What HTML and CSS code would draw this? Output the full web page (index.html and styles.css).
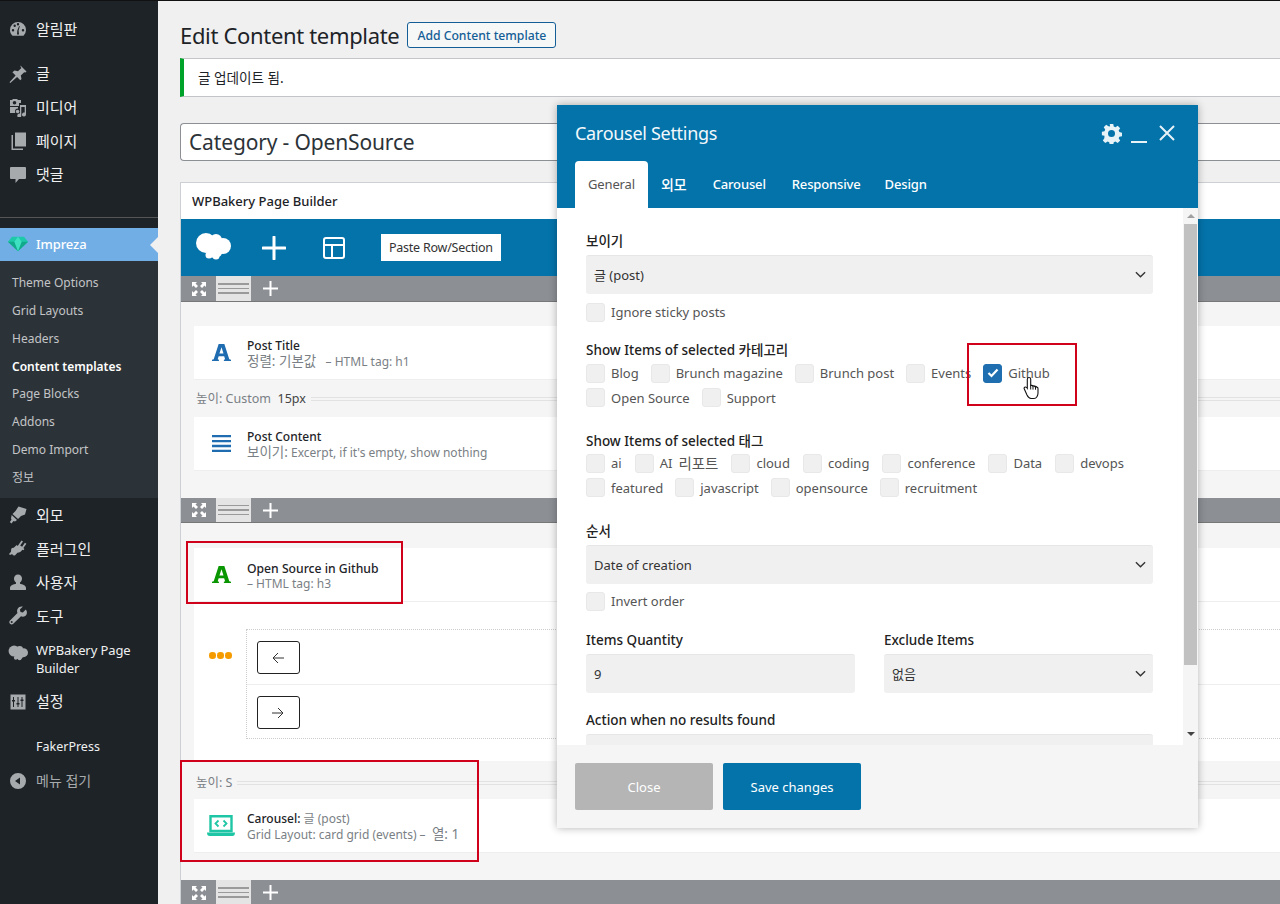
FILE: index.html
```html
<!DOCTYPE html>
<html lang="ko">
<head>
<meta charset="utf-8">
<title>Edit Content template</title>
<link rel="stylesheet" href="styles.css">
</head>
<body>
<aside class="sidebar">
  <ul class="menu first">
    <li class="item"><svg class="ic" viewBox="0 0 20 20"><path d="M10 3a8 8 0 0 0-8 8c0 2.300 1 4.300 2.500 5.700h11A8 8 0 0 0 18 11a8 8 0 0 0-8-8zM5 12.500a1.200 1.200 0 1 1 0-2.500 1.200 1.200 0 0 1 0 2.500zM6.700 8a1.200 1.200 0 1 1 0-2.400 1.200 1.200 0 0 1 0 2.400zM10 6.500a1.200 1.200 0 1 1 0-2.400 1.200 1.200 0 0 1 0 2.400zM11 15.500H9l.3-4 1.800-4.500.7.200-1.200 4.300zM15 12.500a1.200 1.200 0 1 1 0-2.500 1.200 1.200 0 0 1 0 2.500z" fill-rule="evenodd"/></svg>알림판</li>
  </ul>
  <ul class="menu posts">
    <li class="item"><svg class="ic" viewBox="0 0 20 20"><path d="M12.500 1.500l6 6-1 1-1.300-.3-3.400 3.400.7 3.400-1.200 1.200-3.200-3.200-6.800 6.100-.8-.8 6.100-6.800-3.200-3.200L6.600 6.600l3.400.7 3.400-3.400-.9-1.400z"/></svg>글</li>
    <li class="item"><svg class="ic" viewBox="0 0 20 20"><path d="M5 2h4l1 1h3v3H11v3H2V3h2zM6.500 4a1.800 1.800 0 1 0 0 3.600 1.800 1.800 0 0 0 0-3.600zM2 10h8v1.500A3 3 0 0 0 7 14.500c0 .5.100 1 .3 1.500H2zM12 8h6v9.500a2 2 0 1 1-1.300-1.900V10h-3.400v8.500a2 2 0 1 1-1.300-1.900z" fill-rule="evenodd"/><circle cx="9.600" cy="14.500" r="1.800"/></svg>미디어</li>
    <li class="item"><svg class="ic" viewBox="0 0 20 20"><path d="M7 1.500h11v14H7zM5 4v13.500h10V19H3.500V4z"/></svg>페이지</li>
    <li class="item"><svg class="ic" viewBox="0 0 20 20"><path d="M3 3h14a1 1 0 0 1 1 1v10a1 1 0 0 1-1 1h-6l-3.500 4v-4H3a1 1 0 0 1-1-1V4a1 1 0 0 1 1-1z"/></svg>댓글</li>
  </ul>
  <div class="sep"></div>
  <div class="item active"><svg class="ic gem" viewBox="0 0 24 20"><path d="M5.500 2h13L23 7.500 12 18 1 7.500z" fill="#1dc9a8"/><path d="M1 7.500h22L12 18z" fill="#11a98c"/><path d="M8 7.500L12 2l4 5.500L12 18z" fill="#3fe0c2"/></svg>Impreza</div>
  <ul class="submenu">
    <li>Theme Options</li>
    <li>Grid Layouts</li>
    <li>Headers</li>
    <li class="current">Content templates</li>
    <li>Page Blocks</li>
    <li>Addons</li>
    <li>Demo Import</li>
    <li>정보</li>
  </ul>
  <ul class="menu lower">
    <li class="item"><svg class="ic" viewBox="0 0 20 20"><path d="M18.500 4L10.500 1.500 7.500 6 4.500 9l5.500 5 3-3 4-1.500zM3.700 10l5.300 5-2 1.500-1.500-.5L3.500 18.500 1.800 17l1.700-2.300-.5-1.500z"/></svg>외모</li>
    <li class="item"><svg class="ic" viewBox="0 0 20 20"><path d="M13.500 1.500l1.500 1-2.800 4 1.900 1.300 2.800-4 1.500 1-3 4.300 1 .8-1 1.400-1-.6c-1.300 1.800-3 3-5 3l-2.500 2.800-2-.2-.7-1.300L2 16l-1-1 2-2.200.2-2.800L4 9l1.700-.2 3-2.700 1 .8z"/></svg>플러그인</li>
    <li class="item"><svg class="ic" viewBox="0 0 20 20"><path d="M10 2.500a4 4 0 0 1 4 4.300c0 1.500-.9 3-2 3.700v1.200c2 .6 6 1.300 6 4.300v1.500a.9.900 0 0 1-.9.500H2.900a.9.900 0 0 1-.9-.5V16c0-3 4-3.700 6-4.300v-1.200c-1.100-.7-2-2.200-2-3.700a4 4 0 0 1 4-4.300z"/></svg>사용자</li>
    <li class="item"><svg class="ic" viewBox="0 0 20 20"><path d="M17.800 3.500l-3 3-2.300-.6-.6-2.300 3-3C13 0 10.700.8 9.700 2.700c-.8 1.300-.8 3-.2 4.200L2 14.500C.9 15.600 1.200 17 2 17.800s2.300 1.100 3.300 0l7.700-7.500c1.300.6 2.900.5 4.200-.2 1.800-1.200 2.500-4.300.6-6.600zM3.700 17a1 1 0 1 1 0-2 1 1 0 0 1 0 2z" fill-rule="evenodd"/></svg>도구</li>
    <li class="item two"><svg class="ic cloud" viewBox="0 0 36 27"><circle cx="11" cy="10" r="10"/><circle cx="21" cy="7" r="6"/><circle cx="28" cy="13" r="8"/><circle cx="20" cy="17" r="8"/><circle cx="14" cy="22" r="3.500"/><circle cx="21" cy="23" r="3.500"/></svg><span>WPBakery Page<br>Builder</span></li>
    <li class="item"><svg class="ic" viewBox="0 0 20 20"><path d="M2.500 2.500h15v15h-15zM5 5v3H4v1.500h1V15h1V9.500h1V8H6V5zm4.500 0v6H8.500v1.500h1V15h1v-2.500h1V11h-1V5zm4 0v2.500h-1V9h1v6h1V9h1V7.500h-1V5z" fill-rule="evenodd"/></svg>설정</li>
  </ul>
  <ul class="menu extra">
    <li class="item plain">FakerPress</li>
    <li class="item dim"><svg class="ic" viewBox="0 0 20 20"><path d="M10 2a8 8 0 1 1 0 16 8 8 0 0 1 0-16zm2 4.500L7 10l5 3.500z" fill-rule="evenodd"/></svg>메뉴 접기</li>
  </ul>
</aside>

<main class="main">
  <header class="page-head">
    <h1>Edit Content template</h1>
    <a class="add-btn">Add Content template</a>
  </header>
  <div class="notice">글 업데이트 됨.</div>
  <div class="title-input">Category - OpenSource</div>

  <section class="builder">
    <div class="builder-title">WPBakery Page Builder</div>
    <div class="toolbar">
      <svg class="logo" viewBox="0 0 36 27" fill="#fff"><circle cx="11" cy="10" r="10"/><circle cx="21" cy="7" r="6"/><circle cx="28" cy="13" r="8"/><circle cx="20" cy="17" r="8"/><circle cx="14" cy="22" r="3.500"/><circle cx="21" cy="23" r="3.500"/></svg>
      <svg class="tool-ic" viewBox="0 0 24 24"><path d="M12 1v22M1 12h22" stroke="#fff" stroke-width="3" stroke-linecap="round" fill="none"/></svg>
      <svg class="tool-ic" viewBox="0 0 24 24"><path d="M4 2h16a2 2 0 0 1 2 2v16a2 2 0 0 1-2 2H4a2 2 0 0 1-2-2V4a2 2 0 0 1 2-2zM2 9h20M10 9v13" stroke="#fff" stroke-width="2" fill="none"/></svg>
      <span class="paste">Paste Row/Section</span>
    </div>

    <div class="row-bar">
      <svg class="expand" viewBox="0 0 14 14"><path d="M0 0h5L3.500 1.500 6 4 4 6 1.500 3.500 0 5zM14 0v5l-1.500-1.500L10 6 8 4l2.500-2.500L9 0zM0 14V9l1.500 1.500L4 8l2 2-2.500 2.500L5 14zM14 14H9l1.500-1.500L8 10l2-2 2.500 2.500L14 9z" fill="#fff"/></svg>
      <span class="drag"><i></i><i></i><i></i></span>
      <svg class="plus" viewBox="0 0 15 15"><path d="M7.500 0v15M0 7.500h15" stroke="#fff" stroke-width="2"/></svg>
    </div>
    <div class="row-body first-body">
      <div class="card">
        <svg class="a-ic" viewBox="0 0 20 20"><path d="M7 1h6l5.200 16 1.800.5V19h-7.500v-1.500l1.300-.5-1-3H7l-1 3 1.300.5V19H0v-1.500l1.800-.5zM7.800 11h4.300L10 4.500z" fill="#1f6db0" fill-rule="evenodd"/></svg>
        <div class="card-text"><b>Post Title</b><span><span class="ko">정렬: 기본값</span> &nbsp;&nbsp;– HTML tag: h1</span></div>
      </div>
      <div class="gap-row"><span>높이: Custom &nbsp;<em>15px</em></span><i></i></div>
      <div class="card">
        <svg class="a-ic" viewBox="0 0 20 20"><path d="M0 1h20v2.500H0zM0 6.200h20v2.500H0zM0 11.400h20v2.500H0zM0 16.600h20v2.400H0z" fill="#1f6db0"/></svg>
        <div class="card-text"><b>Post Content</b><span><span class="ko">보이기:</span> Excerpt, if it's empty, show nothing</span></div>
      </div>
    </div>

    <div class="row-bar short">
      <svg class="expand" viewBox="0 0 14 14"><path d="M0 0h5L3.500 1.500 6 4 4 6 1.500 3.500 0 5zM14 0v5l-1.500-1.500L10 6 8 4l2.500-2.500L9 0zM0 14V9l1.500 1.500L4 8l2 2-2.500 2.500L5 14zM14 14H9l1.500-1.500L8 10l2-2 2.500 2.500L14 9z" fill="#fff"/></svg>
      <span class="drag"><i></i><i></i><i></i></span>
      <svg class="plus" viewBox="0 0 15 15"><path d="M7.500 0v15M0 7.500h15" stroke="#fff" stroke-width="2"/></svg>
    </div>
    <div class="row-body second-body">
      <div class="card">
        <svg class="a-ic" viewBox="0 0 20 20"><path d="M7 1h6l5.200 16 1.800.5V19h-7.500v-1.500l1.300-.5-1-3H7l-1 3 1.300.5V19H0v-1.500l1.800-.5zM7.800 11h4.300L10 4.500z" fill="#0a9600" fill-rule="evenodd"/></svg>
        <div class="card-text"><b class="big">Open Source in Github</b><span>– HTML tag: h3</span></div>
      </div>
      <div class="nav-wrap">
        <span class="dots"><i></i><i></i><i></i></span>
        <div class="nav-box">
          <div class="nav-cell"><span class="nav-btn"><svg viewBox="0 0 12 12"><path d="M6 1L1 6l5 5M1 6h11" stroke="#333" fill="none"/></svg></span></div>
          <div class="nav-cell"><span class="nav-btn"><svg viewBox="0 0 12 12"><path d="M6 1l5 5-5 5M11 6H0" stroke="#333" fill="none"/></svg></span></div>
        </div>
      </div>
      <div class="gap-row gap-s"><span>높이: S</span><i></i></div>
      <div class="card">
        <svg class="a-ic laptop" viewBox="0 0 28 22"><path d="M3.500 1.200h21v14.800h-21z" fill="none" stroke="#1fc6a5" stroke-width="2.400"/><path d="M0 17.500h28c0 2.500-1 3.500-2.500 3.500h-23C1 21 0 20 0 17.500z" fill="#1fc6a5"/><path d="M11.500 5.500l-3 3 3 3M16.500 5.500l3 3-3 3" fill="none" stroke="#1fc6a5" stroke-width="1.800"/></svg>
        <div class="card-text"><b>Carousel: <u>글 (post)</u></b><span>Grid Layout: card grid (events) – &nbsp;<span class="ko">열: 1</span></span></div>
      </div>
    </div>

    <div class="row-bar">
      <svg class="expand" viewBox="0 0 14 14"><path d="M0 0h5L3.500 1.500 6 4 4 6 1.500 3.500 0 5zM14 0v5l-1.500-1.500L10 6 8 4l2.500-2.500L9 0zM0 14V9l1.500 1.500L4 8l2 2-2.500 2.500L5 14zM14 14H9l1.500-1.500L8 10l2-2 2.500 2.500L14 9z" fill="#fff"/></svg>
      <span class="drag"><i></i><i></i><i></i></span>
      <svg class="plus" viewBox="0 0 15 15"><path d="M7.500 0v15M0 7.500h15" stroke="#fff" stroke-width="2"/></svg>
    </div>
  </section>
</main>

<div class="mark mark-a"></div>
<div class="mark mark-b"></div>

<section class="modal">
  <header class="modal-head">
    <div class="modal-title">
      <h2>Carousel Settings</h2>
      <div class="modal-actions">
        <svg class="gear" viewBox="0 0 24 24"><path d="M10 1h4l.6 3 1.900.8 2.600-1.700 2.800 2.800-1.700 2.600.8 1.900 3 .6v4l-3 .6-.8 1.900 1.700 2.600-2.800 2.800-2.600-1.700-1.900.8-.6 3h-4l-.6-3-1.900-.8-2.600 1.700-2.800-2.800 1.700-2.600L4 14.600l-3-.6v-4l3-.6.8-1.900-1.700-2.600 2.800-2.800 2.600 1.700L10.400 4zM12 8a4 4 0 1 0 0 8 4 4 0 0 0 0-8z" fill="#e8f3f8" fill-rule="evenodd"/></svg>
        <span class="minimize"></span>
        <svg class="close-x" viewBox="0 0 16 16"><path d="M1 1l14 14M15 1L1 15" stroke="#e8f3f8" stroke-width="2" fill="none"/></svg>
      </div>
    </div>
    <nav class="tabs">
      <span class="tab on">General</span>
      <span class="tab ko-tab">외모</span>
      <span class="tab">Carousel</span>
      <span class="tab">Responsive</span>
      <span class="tab">Design</span>
    </nav>
  </header>
  <div class="modal-body">
    <div class="form">
      <div class="field">
        <label class="lbl">보이기</label>
        <div class="select">글 (post)<svg viewBox="0 0 12 8"><path d="M1 1l5 5 5-5" stroke="#333" stroke-width="1.500" fill="none"/></svg></div>
        <div class="check-row single"><span class="chk"><i></i>Ignore sticky posts</span></div>
      </div>
      <div class="field group-a">
        <label class="lbl">Show Items of selected 카테고리</label>
        <div class="check-row"><span class="chk"><i></i>Blog</span><span class="chk"><i></i>Brunch magazine</span><span class="chk"><i></i>Brunch post</span><span class="chk"><i></i>Events</span><span class="chk checked"><i><svg viewBox="0 0 12 10"><path d="M1.500 5l3 3 6-6.500" stroke="#fff" stroke-width="2.200" fill="none"/></svg></i>Github</span></div>
        <div class="check-row"><span class="chk"><i></i>Open Source</span><span class="chk"><i></i>Support</span></div>
      </div>
      <div class="field group-b">
        <label class="lbl">Show Items of selected 태그</label>
        <div class="check-row wide"><span class="chk"><i></i>ai</span><span class="chk"><i></i>AI <span class="ko-lg">리포트</span></span><span class="chk"><i></i>cloud</span><span class="chk"><i></i>coding</span><span class="chk"><i></i>conference</span><span class="chk"><i></i>Data</span><span class="chk"><i></i>devops</span></div>
        <div class="check-row"><span class="chk"><i></i>featured</span><span class="chk"><i></i>javascript</span><span class="chk"><i></i>opensource</span><span class="chk"><i></i>recruitment</span></div>
      </div>
      <div class="field group-c">
        <label class="lbl">순서</label>
        <div class="select">Date of creation<svg viewBox="0 0 12 8"><path d="M1 1l5 5 5-5" stroke="#333" stroke-width="1.500" fill="none"/></svg></div>
        <div class="check-row single"><span class="chk"><i></i>Invert order</span></div>
      </div>
      <div class="two-col">
        <div><label class="lbl">Items Quantity</label><div class="select">9</div></div>
        <div><label class="lbl">Exclude Items</label><div class="select">없음<svg viewBox="0 0 12 8"><path d="M1 1l5 5 5-5" stroke="#333" stroke-width="1.500" fill="none"/></svg></div></div>
      </div>
      <div class="field group-d">
        <label class="lbl">Action when no results found</label>
        <div class="select"></div>
      </div>
    </div>
    <div class="scrollbar">
      <span class="arrow up"></span>
      <span class="thumb"></span>
      <span class="arrow down"></span>
    </div>
  </div>
  <footer class="modal-foot">
    <button class="btn grey">Close</button>
    <button class="btn blue">Save changes</button>
  </footer>
</section>

<div class="mark mark-c"></div>
<svg class="hand" viewBox="0 0 17 24"><path d="M6 1.500c1 0 1.700.7 1.700 1.700v6.300l1-.2c.6 0 1 .3 1.200.8.500-.4 1.500-.3 1.800.4.600-.4 1.700-.2 2 .6.700 0 1.300.5 1.300 1.400v4.500c0 2.500-1.500 5.500-4 5.500H8c-2 0-3-1.500-4-3.500L1.300 13c-.5-1 0-1.900.8-2 .9-.2 1.500.3 2.200 1.300V3.200c0-1 .7-1.700 1.700-1.700z" fill="#fff" stroke="#111" stroke-width="1.100"/><path d="M7.700 9.500v4M10 9.600v4M12.500 10.200v3.500" stroke="#111" fill="none"/></svg>
</body>
</html>
```
FILE: styles.css
```css
* { box-sizing: border-box; }
html, body { margin: 0; padding: 0; }
body {
  width: 1280px; height: 904px; overflow: hidden; display: flex;
  position: relative; background: #f0f0f1; border-top: 1px solid #111;
  font: 13px/1.4 "Noto Sans", "Noto Sans CJK KR", sans-serif; color: #3c434a;
}
ul { list-style: none; margin: 0; padding: 0; }

/* sidebar */
.sidebar { width: 158px; height: 903px; flex: none; background: #1d2327; color: #f0f0f1; padding-top: 11px; }
.item { display: flex; align-items: center; height: 33.6px; padding-left: 36px; position: relative; font-size: 15px; line-height: 18px; }
.ic { position: absolute; left: 8px; top: 7px; width: 20px; height: 20px; fill: #a7aaad; }
.posts { margin-top: 11px; }
.sep { height: 1px; background: #555; margin-top: 25.6px; }
.active { margin-top: 10px; height: 33px; background: #72aee6; color: #fff; font-weight: 500; font-size: 13px; letter-spacing: -.1px; }
.active::after { content: ""; position: absolute; right: 0; top: 9px; border: 8px solid transparent; border-right-color: #f0f0f1; border-left: 0; }
.ic.gem { left: 7px; top: 6px; width: 22px; }
.submenu { background: #2c3338; height: 237px; padding-top: 8.700px; }
.submenu li { height: 27.75px; line-height: 27.75px; padding-left: 12px; font-size: 12px; color: #c3c4c7; }
.submenu .current { color: #fff; font-weight: 600; }
.lower { margin-top: .7px; }
.two { height: 52px; font-size: 13px; letter-spacing: -.1px; }
.ic.cloud { left: 8px; top: 12px; width: 20px; height: 16px; }
.extra { margin-top: 12px; }
.plain { font-size: 12.500px; }
.dim { color: #a7aaad; font-size: 14px; }

/* main */
.main { flex: 1; min-width: 0; padding-left: 22px; }
.page-head { display: flex; align-items: center; height: 57px; padding-top: 11px; gap: 8px; }
h1 { margin: 0; font-size: 22px; font-weight: 400; color: #1d2327; line-height: 44px; letter-spacing: -.33px; }
.add-btn { border: 1px solid #135e96; border-radius: 3px; height: 26px; padding: 0 9px; line-height: 25px; font-size: 12.200px; font-weight: 500; color: #135e96; background: #f6f7f7; }
.notice { height: 39px; background: #fff; border-left: 4px solid #00a32a; border-bottom: 1px solid #c3c4c7; border-top: 1px solid #c3c4c7; padding-left: 14px; line-height: 37px; color: #1d2327; font-size: 13.600px; }
.title-input { height: 38px; margin-top: 26px; border: 1px solid #8c8f94; border-right: 0; border-radius: 4px 0 0 4px; background: #fff; padding-left: 8px; font-size: 21px; line-height: 37px; color: #2c3338; letter-spacing: -.15px; }
.builder { margin-top: 21px; border-left: 1px solid #ccd0d4; border-top: 1px solid #ccd0d4; }
.builder-title { height: 36px; background: #fff; padding-left: 11px; font-size: 13px; line-height: 36px; font-weight: 500; color: #1d2327; }
.toolbar { height: 57px; background: #0473aa; display: flex; align-items: center; padding-left: 14px; }
.logo { width: 36px; height: 27px; margin-right: 31px; margin-top: -3px; }
.tool-ic { width: 24px; height: 24px; margin-right: 36px; }
.tool-ic:nth-of-type(3) { margin-right: 35px; }
.paste { background: #fff; height: 27px; padding: 0 8px; line-height: 27px; color: #333; font-size: 12.500px; letter-spacing: -.24px; }
.row-bar { height: 26px; background: #8c8f94; display: flex; align-items: center; padding-left: 11px; border-bottom: 1px solid #777; }
.row-bar.short { height: 25px; }
.expand { width: 14px; height: 14px; }
.drag { width: 35px; height: 100%; margin-left: 10px; background: #e4e4e4; display: flex; flex-direction: column; justify-content: center; gap: 3px; padding: 0 2px; }
.drag i { display: block; height: 1.500px; background: #9a9a9a; }
.plus { width: 15px; height: 15px; margin-left: 12px; }
.row-body { background: #f5f5f5; padding-left: 13px; }
.first-body { height: 196px; padding-top: 24px; }
.second-body { height: 357px; padding-top: 25px; }
.card { height: 54px; background: #fff; display: flex; align-items: center; padding-left: 18px; border-bottom: 1px solid #eee; }
.a-ic { width: 19px; height: 19px; flex: none; margin-right: 16px; }
.a-ic.laptop { width: 28px; height: 22px; margin-left: -5px; margin-right: 12px; }
.card-text { display: flex; flex-direction: column; line-height: 16px; font-size: 12px; color: #7a7f85; padding-top: 3px; }
.card-text b { font-weight: 500; color: #1d2327; line-height: 15px; }
.card-text b.big { font-size: 12.200px; }
.card-text u { text-decoration: none; font-weight: 400; color: #7a7f85; }
.ko { font-size: 13.500px; }
.gap-row { height: 37px; display: flex; align-items: center; gap: 5px; padding-left: 2px; color: #7a7f85; font-size: 12.500px; }
.gap-row em { font-style: normal; color: #444; }
.gap-row i { flex: 1; height: 4px; border-top: 1px solid #e2e2e2; border-bottom: 1px solid #e2e2e2; }
.nav-wrap { height: 159px; background: #fff; padding: 27px 0 0 15px; display: flex; }
.dots { display: flex; gap: 1.500px; margin-top: 23px; height: 7px; }
.dots i { width: 6.500px; height: 6.500px; border-radius: 50%; background: #f59b00; }
.nav-box { margin-left: 14px; flex: 1; height: 110px; border: 1px dotted #ccc; border-right: 0; }
.nav-cell { height: 55px; padding: 11px 0 0 10px; border-bottom: 1px solid #eee; }
.nav-cell:last-child { border-bottom: 0; }
.nav-btn { display: flex; align-items: center; justify-content: center; width: 43px; height: 33px; border: 1px solid #222; border-radius: 3px; background: #fff; }
.nav-btn svg { width: 12px; height: 12px; }
.gap-s { height: 38px; padding-top: 6px; }

/* overlay marks */
.mark { position: absolute; border: 2px solid #d0021b; z-index: 5; }
.mark-a { left: 186px; top: 540px; width: 217px; height: 63px; }
.mark-b { left: 180px; top: 759px; width: 299px; height: 102px; }
.mark-c { left: 967px; top: 342px; width: 110px; height: 63px; z-index: 12; }
.hand { position: absolute; left: 1023px; top: 375px; width: 17px; height: 24px; z-index: 13; }

/* modal */
.modal { position: absolute; left: 557px; top: 104px; width: 641px; height: 723px; z-index: 10; background: #fff; display: flex; flex-direction: column; box-shadow: 0 0 8px rgba(0,0,0,.3); }
.modal-head { height: 103px; background: #0473aa; padding: 0 18px; flex: none; color: #fff; }
.modal-title { height: 56px; display: flex; align-items: center; justify-content: space-between; }
h2 { margin: 1px 0 0; font-size: 18px; font-weight: 400; color: #f2f8fb; letter-spacing: -.3px; }
.modal-actions { display: flex; align-items: center; gap: 9px; padding-right: 5px; }
.gear { width: 21px; height: 21px; }
.minimize { width: 16px; height: 2px; background: #e8f3f8; margin-top: 17px; }
.close-x { width: 16px; height: 16px; margin-left: 3px; }
.tabs { display: flex; height: 47px; }
.tab { padding: 0 13px; line-height: 47px; font-size: 13px; font-weight: 500; color: #fff; letter-spacing: -.15px; }
.tab.ko-tab { font-size: 14px; letter-spacing: 0; }
.tab:last-child { margin-left: -2px; }
.tab.on { background: #fff; color: #555; border-radius: 4px 4px 0 0; font-weight: 400; }
.modal-body { height: 537px; display: flex; flex: none; }
.form { flex: 1; padding: 23px 30px 0 29px; overflow: hidden; min-width: 0; }
.lbl { display: block; height: 24px; line-height: 20px; font-size: 13.500px; font-weight: 500; color: #222; }
.select { height: 39px; background: #f0f0f0; border-radius: 3px; border-top: 1px solid #e6e6e6; padding: 0 8px; display: flex; align-items: center; justify-content: space-between; font-size: 13px; color: #333; }
.select svg { width: 11px; height: 8px; margin-right: -1px; }
.check-row { display: flex; height: 24.500px; gap: 12px; align-items: center; }
.check-row.wide { gap: 13px; }
.check-row.single { margin-top: 9px; height: 19px; }
.chk { display: flex; align-items: center; gap: 6px; font-size: 13px; color: #555; white-space: nowrap; }
.ko-lg { font-size: 14.500px; }
.chk i { width: 19px; height: 19px; flex: none; border-radius: 3px; background: #f0f0f0; border: 1px solid #e8e8e8; display: flex; align-items: center; justify-content: center; }
.chk.checked i { background: #1f6fb0; border-color: #1f6fb0; }
.chk.checked svg { width: 12px; height: 10px; }
.group-a { margin-top: 18px; }
.group-a .lbl { height: 21px; }
.group-b { margin-top: 21px; }
.group-b .lbl { height: 20px; }
.group-c { margin-top: 21px; }
.group-c .check-row.single { margin-top: 8px; }
.two-col { display: grid; grid-template-columns: 269px 269px; gap: 29px; margin-top: 19px; }
.group-d { margin-top: 17px; }
.scrollbar { width: 15px; flex: none; background: #f5f5f5; display: flex; flex-direction: column; align-items: center; }
.arrow { flex: none; border: 4px solid transparent; }
.arrow.up { border-bottom: 4px solid #a0a0a0; border-top: 0; margin: 6px 0; }
.arrow.down { border-top: 4px solid #444; border-bottom: 0; margin: 67px 0 0; }
.thumb { width: 13px; height: 441px; background: #c1c1c1; }
.modal-foot { flex: 1; background: #f5f5f5; padding: 18px; display: flex; gap: 10px; }
.btn { width: 138px; height: 47px; border: 0; border-radius: 2px; font: 13px "Noto Sans", sans-serif; color: #fff; }
.btn.grey { background: #b5b5b5; }
.btn.blue { background: #0473aa; }
```
